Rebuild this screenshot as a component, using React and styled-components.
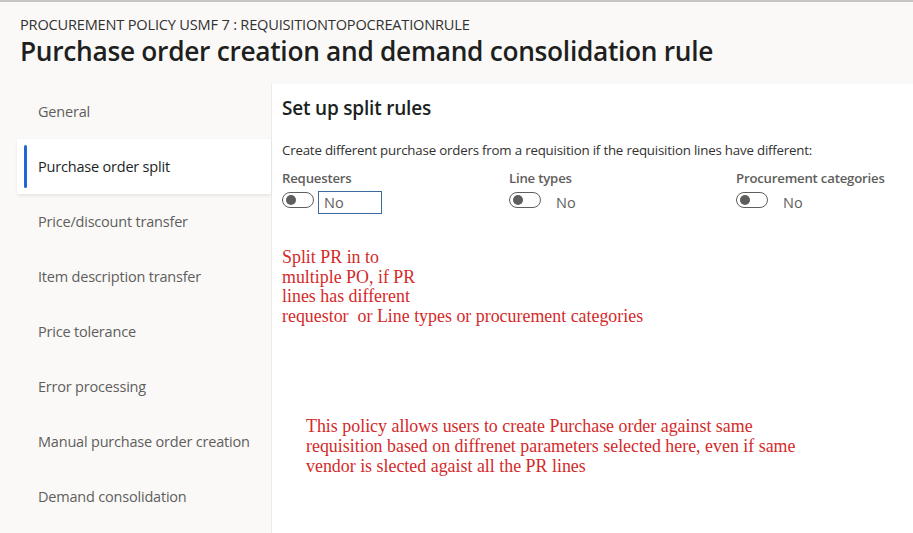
import React, { useState } from "react";
import styled, { createGlobalStyle } from "styled-components";

const GlobalStyle = createGlobalStyle`
  html, body {
    margin: 0;
    padding: 0;
    background: #ffffff;
  }
  body {
    font-family: "Open Sans", "Noto Sans", sans-serif;
    color: #201f1e;
  }
`;

const Page = styled.div`
  width: 913px;
  height: 533px;
  overflow: hidden;
  display: flex;
  flex-direction: column;
  background: #faf9f8;
  border-top: 2px solid #c8c6c4;
  box-sizing: border-box;
`;

const Header = styled.div`
  padding: 12px 20px 0 20px;
  height: 82px;
  box-sizing: border-box;
  flex-shrink: 0;

  .caption {
    font-size: 14.6px;
    color: #323130;
    letter-spacing: -0.2px;
    line-height: 20px;
  }
  .title {
    font-size: 26.3px;
    font-weight: 600;
    line-height: 34px;
    letter-spacing: -0.3px;
    color: #201f1e;
  }
`;

const Body = styled.div`
  flex: 1;
  display: flex;
`;

const Sidebar = styled.div`
  width: 271px;
  flex-shrink: 0;
  display: flex;
  flex-direction: column;
  align-items: flex-end;
`;

const Tab = styled.div`
  position: relative;
  width: 254px;
  height: 55px;
  box-sizing: border-box;
  padding-left: 21px;
  display: flex;
  align-items: center;
  font-size: 14.5px;
  letter-spacing: -0.2px;
  color: ${(p) => (p.active ? "#201f1e" : "#605e5c")};
  background: ${(p) => (p.active ? "#ffffff" : "transparent")};
  box-shadow: ${(p) => (p.active ? "0 2px 3px rgba(0,0,0,0.08)" : "none")};
  cursor: pointer;

  &::before {
    content: "";
    display: ${(p) => (p.active ? "block" : "none")};
    position: absolute;
    left: 7px;
    top: 6px;
    bottom: 6px;
    width: 3px;
    border-radius: 2px;
    background: #2266d4;
  }
`;

const Main = styled.div`
  flex: 1;
  background: #ffffff;
  border-left: 1px solid #edebe9;
  padding: 12px 10px 0 10px;
`;

const SectionTitle = styled.div`
  font-size: 19px;
  font-weight: 600;
  color: #201f1e;
  letter-spacing: -0.2px;
  line-height: 24px;
`;

const Description = styled.div`
  margin-top: 21px;
  font-size: 13.3px;
  letter-spacing: -0.2px;
  color: #323130;
  line-height: 18px;
`;

const Fields = styled.div`
  display: grid;
  grid-template-columns: 227px 227px 1fr;
  margin-top: 11px;
`;

const Field = styled.div`
  display: flex;
  flex-direction: column;
`;

const Label = styled.div`
  font-size: 13.2px;
  font-weight: 600;
  color: #605e5c;
  letter-spacing: -0.2px;
  line-height: 16px;
`;

const ToggleRow = styled.div`
  display: flex;
  align-items: flex-start;
  gap: 4px;
  margin-top: 2px;
  height: 26px;
`;

const Toggle = styled.div`
  width: 32px;
  height: 16px;
  margin-top: 4px;
  box-sizing: border-box;
  border: 1px solid #605e5c;
  border-radius: 9px;
  position: relative;

  &::after {
    content: "";
    position: absolute;
    left: 3px;
    top: 2px;
    width: 10px;
    height: 10px;
    border-radius: 50%;
    background: #605e5c;
  }
`;

const Value = styled.div`
  width: ${(p) => (p.focused ? "64px" : "auto")};
  height: 23px;
  box-sizing: border-box;
  padding-left: ${(p) => (p.focused ? "5px" : "10px")};
  margin-top: 3px;
  border: ${(p) => (p.focused ? "1px solid #3d6a9e" : "1px solid transparent")};
  display: flex;
  align-items: center;
  font-size: 14.5px;
  color: #605e5c;
`;

const Note = styled.div`
  font-family: "Liberation Serif", "Times New Roman", serif;
  color: #d42a2a;
  font-size: ${(p) => p.size}px;
  line-height: 19.6px;
  margin-top: ${(p) => p.top}px;
  margin-left: ${(p) => p.indent}px;
`;

const tabs = [
  "General",
  "Purchase order split",
  "Price/discount transfer",
  "Item description transfer",
  "Price tolerance",
  "Error processing",
  "Manual purchase order creation",
  "Demand consolidation",
];

const fields = [
  { label: "Requesters", focused: true },
  { label: "Line types" },
  { label: "Procurement categories" },
];

export default function App() {
  const [active, setActive] = useState(1);

  return (
    <>
      <GlobalStyle />
      <Page>
        <Header>
          <div className="caption">
            PROCUREMENT POLICY USMF 7 : REQUISITIONTOPOCREATIONRULE
          </div>
          <div className="title">
            Purchase order creation and demand consolidation rule
          </div>
        </Header>
        <Body>
          <Sidebar>
            {tabs.map((t, i) => (
              <Tab key={t} active={i === active} onClick={() => setActive(i)}>
                {t}
              </Tab>
            ))}
          </Sidebar>
          <Main>
            <SectionTitle>Set up split rules</SectionTitle>
            <Description>
              Create different purchase orders from a requisition if the
              requisition lines have different:
            </Description>
            <Fields>
              {fields.map((f) => (
                <Field key={f.label}>
                  <Label>{f.label}</Label>
                  <ToggleRow>
                    <Toggle />
                    <Value focused={f.focused}>No</Value>
                  </ToggleRow>
                </Field>
              ))}
            </Fields>
            <Note size={17.9} top={34} indent={0}>
              Split PR in to
              <br />
              multiple PO, if PR
              <br />
              lines has different
              <br />
              requestor&nbsp; or Line types or procurement categories
            </Note>
            <Note size={17.9} top={91} indent={24}>
              This policy allows users to create Purchase order against same
              <br />
              requisition based on diffrenet parameters selected here, even if
              same
              <br />
              vendor is slected agaist all the PR lines
            </Note>
          </Main>
        </Body>
      </Page>
    </>
  );
}
